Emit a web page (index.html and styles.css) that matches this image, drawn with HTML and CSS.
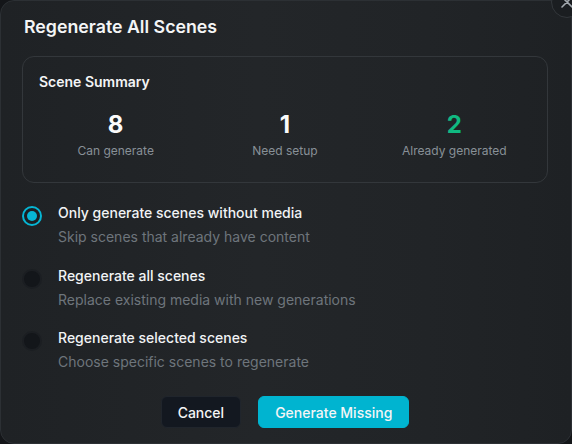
FILE: index.html
```html
<!DOCTYPE html>
<html>
    <head>
        <title>Regenerate All Scenes</title>
        <link rel="stylesheet" href="styles.css">
    </head>
    <body>
        <div class="dialog">
            <button class="closeButton" aria-label="Close">
                <svg width="12" height="12" viewBox="0 0 12 12" fill="none" stroke="currentColor" stroke-width="1.6" stroke-linecap="round">
                    <path d="M1 1L11 11M11 1L1 11"/>
                </svg>
            </button>

            <h2 class="dialogTitle">Regenerate All Scenes</h2>

            <!-- Counts for the current project -->
            <div class="summary">
                <div class="summaryTitle">Scene Summary</div>
                <div class="stats">
                    <div class="stat">
                        <div class="statValue">8</div>
                        <div class="statLabel">Can generate</div>
                    </div>
                    <div class="stat">
                        <div class="statValue">1</div>
                        <div class="statLabel">Need setup</div>
                    </div>
                    <div class="stat">
                        <div class="statValue done">2</div>
                        <div class="statLabel">Already generated</div>
                    </div>
                </div>
            </div>

            <!-- Generation mode -->
            <div class="options">
                <label class="option">
                    <span class="radio checked"></span>
                    <span class="optionText">
                        <span class="optionLabel">Only generate scenes without media</span>
                        <span class="optionDesc">Skip scenes that already have content</span>
                    </span>
                </label>
                <label class="option">
                    <span class="radio"></span>
                    <span class="optionText">
                        <span class="optionLabel">Regenerate all scenes</span>
                        <span class="optionDesc">Replace existing media with new generations</span>
                    </span>
                </label>
                <label class="option">
                    <span class="radio"></span>
                    <span class="optionText">
                        <span class="optionLabel">Regenerate selected scenes</span>
                        <span class="optionDesc">Choose specific scenes to regenerate</span>
                    </span>
                </label>
            </div>

            <div class="actions">
                <button class="cancelButton">Cancel</button>
                <button class="primaryButton">Generate Missing</button>
            </div>
        </div>
    </body>
</html>
```

FILE: styles.css
```css
/* Dialog layout for the scene regeneration modal */
body {
    margin: 0;
    background-color: #141619;
    font-family: 'Inter', 'Noto Sans', sans-serif;
    overflow: hidden;
}

.dialog {
    position: relative;
    box-sizing: border-box;
    width: 572px;
    height: 444px;
    padding: 12px 23px 0 21px;
    background: linear-gradient(90deg, #1f2225 0%, #232629 45%, #212427 75%, #1e2124 100%);
    border: 1px solid #2c3034;
    border-radius: 14px;
    color: #f3f4f6;
}

.closeButton {
    position: absolute;
    top: -15px;
    right: -12px;
    width: 32px;
    height: 32px;
    border-radius: 50%;
    background-color: #1b1e21;
    border: 1px solid #33373b;
    color: #a3a9af;
    display: flex;
    align-items: center;
    justify-content: center;
    padding: 0;
}

.dialogTitle {
    margin: 0 0 0 2px;
    font-size: 17.75px;
    line-height: 28px;
    font-weight: 600;
    color: #f4f5f6;
}

.summary {
    margin-top: 15px;
    padding: 15px 16px 22px;
    border: 1px solid #33373b;
    border-radius: 12px;
}

.summaryTitle {
    font-size: 14px;
    line-height: 20px;
    font-weight: 600;
    color: #f4f5f6;
}

.stats {
    display: grid;
    grid-template-columns: repeat(3, 1fr);
    gap: 16px;
    margin-top: 17px;
    text-align: center;
}

.statValue {
    font-size: 24px;
    line-height: 32px;
    font-weight: 700;
    color: #fafafa;
}

.statValue.done {
    color: #10b981;
}

.statLabel {
    font-size: 12px;
    line-height: 19px;
    color: #889097;
}

.options {
    display: flex;
    flex-direction: column;
    gap: 18.5px;
    margin-top: 20px;
}

.option {
    display: flex;
    gap: 16px;
}

.radio {
    flex: none;
    box-sizing: border-box;
    width: 20px;
    height: 20px;
    margin-top: 3px;
    border-radius: 50%;
    border: 2px solid #1b1e22;
    background-color: #13161a;
    display: flex;
    align-items: center;
    justify-content: center;
}

.radio.checked {
    border-color: #06b6d4;
    background-color: #1c1f22;
}

.radio.checked::after {
    content: "";
    width: 10px;
    height: 10px;
    border-radius: 50%;
    background-color: #06b6d4;
}

.optionText {
    display: flex;
    flex-direction: column;
    gap: 4px;
}

.optionLabel {
    font-size: 14px;
    line-height: 20px;
    font-weight: 500;
    color: #f1f3f5;
}

.optionDesc {
    font-size: 14px;
    line-height: 20px;
    color: #6e757c;
}

.actions {
    display: flex;
    justify-content: center;
    gap: 17px;
    margin-top: 24px;
}

.actions button {
    height: 32px;
    padding: 0 16px;
    border-radius: 6px;
    font-family: inherit;
    font-size: 14px;
    font-weight: 500;
    color: #f4f5f6;
}

.cancelButton {
    background-color: #131820;
    border: 1px solid #20252c;
}

.primaryButton {
    background-color: #00b4d0;
    border: 1px solid #00b4d0;
    color: #ffffff;
}
```
